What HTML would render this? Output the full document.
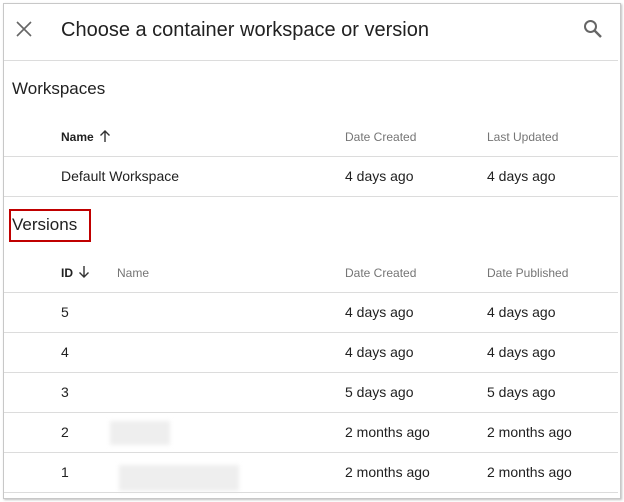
<!DOCTYPE html>
<html><head><style>
body{margin:0;width:624px;height:502px;background:#fff;font-family:"Liberation Sans",sans-serif;position:relative;overflow:hidden}
.a{position:absolute;white-space:nowrap}
.hl{position:absolute;left:4px;width:614px;height:1px;background:#dcdcdc}
.t{font-size:14px;color:#212121}
.h{font-size:12px;color:#757575}
.blur{position:absolute;background:#eee;filter:blur(2px)}
</style></head><body>
<div style="position:absolute;left:3px;top:3px;width:616px;height:494px;border:1px solid #c8c8c8;box-shadow:1px 1px 2px rgba(0,0,0,.25)"></div>
<svg class="a" style="left:16px;top:21px" width="16" height="16" viewBox="0 0 16 16"><path d="M1 1L15 15M15 1L1 15" stroke="#666" stroke-width="1.6"/></svg>
<div class="a" style="left:61px;top:19px;font-size:20px;color:#212121">Choose a container workspace or version</div>
<svg class="a" style="left:583px;top:19px" width="20" height="20" viewBox="0 0 20 20"><circle cx="7.5" cy="7.5" r="5.5" fill="none" stroke="#666" stroke-width="2"/><path d="M11.5 11.5L18 18" stroke="#666" stroke-width="2.4"/></svg>
<div class="hl" style="top:60px"></div>
<div class="a" style="left:12px;top:79px;font-size:17px;color:#212121">Workspaces</div>
<div class="a h" style="left:61px;top:130px;color:#212121;font-weight:bold">Name</div>
<svg class="a" style="left:99px;top:129px" width="12" height="14" viewBox="0 0 12 14"><path d="M6 13V2M1.5 6.5L6 2l4.5 4.5" stroke="#333" stroke-width="1.4" fill="none"/></svg>
<div class="a h" style="left:345px;top:130px">Date Created</div>
<div class="a h" style="left:487px;top:130px">Last Updated</div>
<div class="hl" style="top:156px"></div>
<div class="a t" style="left:61px;top:168px">Default Workspace</div>
<div class="a t" style="left:345px;top:168px">4 days ago</div>
<div class="a t" style="left:487px;top:168px">4 days ago</div>
<div class="hl" style="top:196px"></div>
<div class="a" style="left:9px;top:209px;width:82px;height:33px;border:2px solid #c00000;box-sizing:border-box"></div>
<div class="a" style="left:12px;top:215px;font-size:17px;color:#212121">Versions</div>
<div class="a h" style="left:61px;top:266px;color:#212121;font-weight:bold">ID</div>
<svg class="a" style="left:78px;top:265px" width="12" height="14" viewBox="0 0 12 14"><path d="M6 1v11M1.5 7.5L6 12l4.5-4.5" stroke="#333" stroke-width="1.4" fill="none"/></svg>
<div class="a h" style="left:117px;top:266px">Name</div>
<div class="a h" style="left:345px;top:266px">Date Created</div>
<div class="a h" style="left:487px;top:266px">Date Published</div>
<div class="hl" style="top:292px"></div>
<div class="a t" style="left:61px;top:304px">5</div><div class="a t" style="left:345px;top:304px">4 days ago</div><div class="a t" style="left:487px;top:304px">4 days ago</div>
<div class="hl" style="top:332px"></div>
<div class="a t" style="left:61px;top:344px">4</div><div class="a t" style="left:345px;top:344px">4 days ago</div><div class="a t" style="left:487px;top:344px">4 days ago</div>
<div class="hl" style="top:372px"></div>
<div class="a t" style="left:61px;top:384px">3</div><div class="a t" style="left:345px;top:384px">5 days ago</div><div class="a t" style="left:487px;top:384px">5 days ago</div>
<div class="hl" style="top:412px"></div>
<div class="blur" style="left:110px;top:421px;width:60px;height:24px"></div>
<div class="a t" style="left:61px;top:424px">2</div><div class="a t" style="left:345px;top:424px">2 months ago</div><div class="a t" style="left:487px;top:424px">2 months ago</div>
<div class="hl" style="top:452px"></div>
<div class="blur" style="left:119px;top:465px;width:120px;height:26px"></div>
<div class="a t" style="left:61px;top:464px">1</div><div class="a t" style="left:345px;top:464px">2 months ago</div><div class="a t" style="left:487px;top:464px">2 months ago</div>
<div class="hl" style="top:492px"></div>
</body></html>
